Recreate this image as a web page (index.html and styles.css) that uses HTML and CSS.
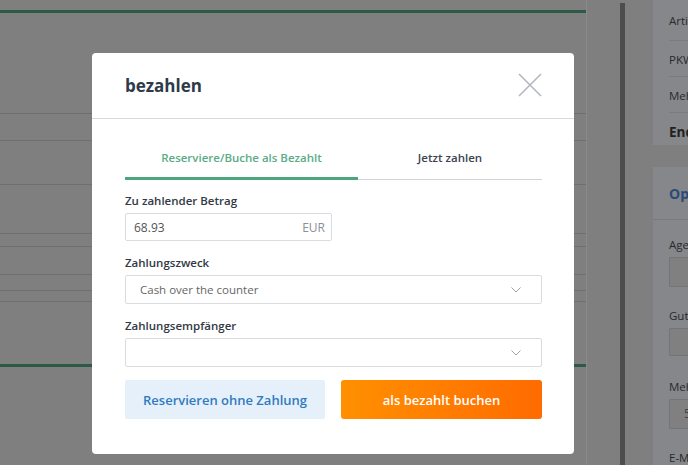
FILE: index.html
```html
<!DOCTYPE html>
<html lang="de">
<head>
<meta charset="utf-8">
<title>bezahlen</title>
<link rel="stylesheet" href="styles.css">
</head>
<body>
<div class="page">
  <div class="main">
    <div class="ln green h13"></div>
    <div class="ln h100"></div>
    <div class="ln h27"></div>
    <div class="ln h44"></div>
    <div class="ln h49"></div>
    <div class="ln h13"></div>
    <div class="ln h28"></div>
    <div class="ln h16"></div>
    <div class="ln h10"></div>
    <div class="ln green h65"></div>
  </div>
  <div class="track"><div class="thumb"></div></div>
  <aside class="sidebar">
    <div class="card card-top">
      <div class="srow">Artikel</div>
      <div class="srow">PKW</div>
      <div class="srow">Mehrwertsteuer</div>
      <div class="srow srow-total">Endpreis</div>
    </div>
    <div class="card card-opt">
      <div class="card-head">Optionen</div>
      <div class="card-body">
        <div class="slabel">Agentur</div>
        <div class="sinput"></div>
        <div class="slabel">Gutschein</div>
        <div class="sinput sinput-s"></div>
        <div class="slabel">Mehrwert</div>
        <div class="sinput">5</div>
        <div class="slabel">E-Mail</div>
      </div>
    </div>
  </aside>
</div>

<div class="modal">
  <div class="modal-head">
    <h1 class="modal-title">bezahlen</h1>
    <svg class="close" width="24" height="24" viewBox="0 0 24 24" aria-label="schließen">
      <path d="M1 1 L23 23 M23 1 L1 23" fill="none" stroke="#b3b8c0" stroke-width="1.6"/>
    </svg>
  </div>
  <div class="modal-body">
    <div class="tabs">
      <div class="tab tab-active">Reserviere/Buche als Bezahlt</div>
      <div class="tab">Jetzt zahlen</div>
    </div>

    <div class="label first">Zu zahlender Betrag</div>
    <div class="amount">
      <span class="amount-val">68.93</span>
      <span class="amount-cur">EUR</span>
    </div>

    <div class="label">Zahlungszweck</div>
    <div class="select">
      <span>Cash over the counter</span>
      <svg class="chev" width="10" height="6" viewBox="0 0 10 6"><path d="M0.5 0.5 L5 5 L9.5 0.5" fill="none" stroke="#9ea3aa" stroke-width="1"/></svg>
    </div>

    <div class="label">Zahlungsempfänger</div>
    <div class="select">
      <span></span>
      <svg class="chev" width="10" height="6" viewBox="0 0 10 6"><path d="M0.5 0.5 L5 5 L9.5 0.5" fill="none" stroke="#9ea3aa" stroke-width="1"/></svg>
    </div>

    <div class="actions">
      <button class="btn btn-light">Reservieren ohne Zahlung</button>
      <button class="btn btn-orange">als bezahlt buchen</button>
    </div>
  </div>
</div>
</body>
</html>
```

FILE: styles.css
```css
* { box-sizing: border-box; }
html, body { margin: 0; padding: 0; }
body {
  width: 688px;
  height: 465px;
  overflow: hidden;
  background: #7f7f7f;
  font-family: "Open Sans", "Liberation Sans", sans-serif;
  color: #2b2b2b;
}

.page { display: flex; height: 465px; width: 688px; overflow: hidden; }

.main {
  flex: none;
  width: 587px;
  border-right: 1px solid #8a8a8a;
  display: flex;
  flex-direction: column;
}
.ln { border-bottom: 1px solid #6f6f6f; flex: none; }
.ln.green { border-bottom: 3px solid #2d5a47; }
.h10 { height: 11px; }
.h13 { height: 13px; }
.h16 { height: 16px; }
.h27 { height: 27px; }
.h28 { height: 28px; }
.h44 { height: 44px; }
.h49 { height: 49px; }
.h65 { height: 65px; }
.h100 { height: 101px; }

.track { width: 66px; padding: 3px 0 0 33px; flex: none; }
.thumb { width: 5px; height: 462px; background: #4d4d4d; }

.sidebar {
  flex: 1;
  min-width: 0;
  overflow: hidden;
  display: flex;
  flex-direction: column;
  gap: 22px;
}
.card { background: #85878a; }
.card-top { padding-left: 16px; height: 145px; flex: none; }
.srow {
  height: 36px;
  border-bottom: 1px solid #7a7c7f;
  display: flex;
  align-items: center;
  font-size: 11.5px;
  white-space: nowrap;
  color: #2a2a2a;
  padding-top: 2px;
}
.srow:first-child { height: 41px; padding-top: 0; }
.srow-total { border-bottom: none; font-weight: 700; font-size: 13.5px; color: #222; }

.card-opt { flex: 1; }
.card-head {
  height: 53px;
  border-bottom: 1px solid #797b7e;
  padding-left: 16px;
  display: flex;
  align-items: center;
  font-weight: 700;
  font-size: 14px;
  color: #2c4a78;
  white-space: nowrap;
}
.card-body { padding: 16px 0 0 16px; }
.slabel { font-size: 11.5px; line-height: 18px; white-space: nowrap; color: #2a2a2a; }
.sinput {
  height: 30px;
  border: 1px solid #727477;
  border-right: none;
  border-radius: 2px 0 0 2px;
  background: #808080;
  margin: 3px 0 20px;
  font-size: 12px;
  color: #444;
  padding-left: 14px;
  line-height: 28px;
}
.sinput-s { height: 28px; margin-bottom: 22px; }

/* modal */
.modal {
  position: absolute;
  left: 92px;
  top: 53px;
  width: 482px;
  background: #fff;
  border-radius: 4px;
}
.modal-head {
  height: 66px;
  border-bottom: 1px solid #d6d9dd;
  display: flex;
  align-items: center;
  justify-content: space-between;
  padding: 0 32px 1px 33px;
}
.modal-title {
  margin: 0;
  font-size: 17px;
  font-weight: 700;
  color: #2e3a4a;
}
.close { display: block; }

.modal-body { padding: 21px 32px 35px 33px; }

.tabs {
  display: grid;
  grid-template-columns: 233px 1fr;
  border-bottom: 1px solid #cfd4d9;
}
.tab {
  position: relative;
  text-align: center;
  font-size: 11.5px;
  font-weight: 600;
  line-height: 18px;
  padding: 9px 0 12px;
  color: #3c4350;
}
.tab-active { color: #5aab86; }
.tab-active::after {
  content: "";
  position: absolute;
  left: 0; right: 0; bottom: -1px;
  height: 3px;
  background: #4da57e;
}

.label {
  font-size: 11.5px;
  font-weight: 600;
  line-height: 18px;
  color: #323944;
  margin: 13px 0 3px;
}
.label.first { margin-top: 12px; }

.amount {
  width: 207px;
  height: 28px;
  border: 1px solid #d9dde2;
  border-radius: 2px;
  display: flex;
  align-items: center;
  justify-content: space-between;
  padding: 0 6px 0 8px;
  font-size: 12px;
}
.amount-val { color: #555; }
.amount-cur { color: #8a8f96; }

.select {
  height: 29px;
  border: 1px solid #d9dde2;
  border-radius: 2px;
  display: flex;
  align-items: center;
  justify-content: space-between;
  padding: 0 20px 0 14px;
  font-size: 11.5px;
  color: #666;
}
.chev { display: block; }

.actions {
  display: grid;
  grid-template-columns: 200px 1fr;
  gap: 16px;
  margin-top: 13px;
}
.btn {
  height: 39px;
  border: none;
  font-family: inherit;
  font-size: 13px;
  font-weight: 600;
  cursor: pointer;
  padding: 0;
}
.btn-light { background: #e6f0fa; color: #2f7bbf; border-radius: 2px; }
.btn-orange {
  background: linear-gradient(90deg, #ff9000, #ff6b00);
  color: #fff;
  border-radius: 3px;
}
```
